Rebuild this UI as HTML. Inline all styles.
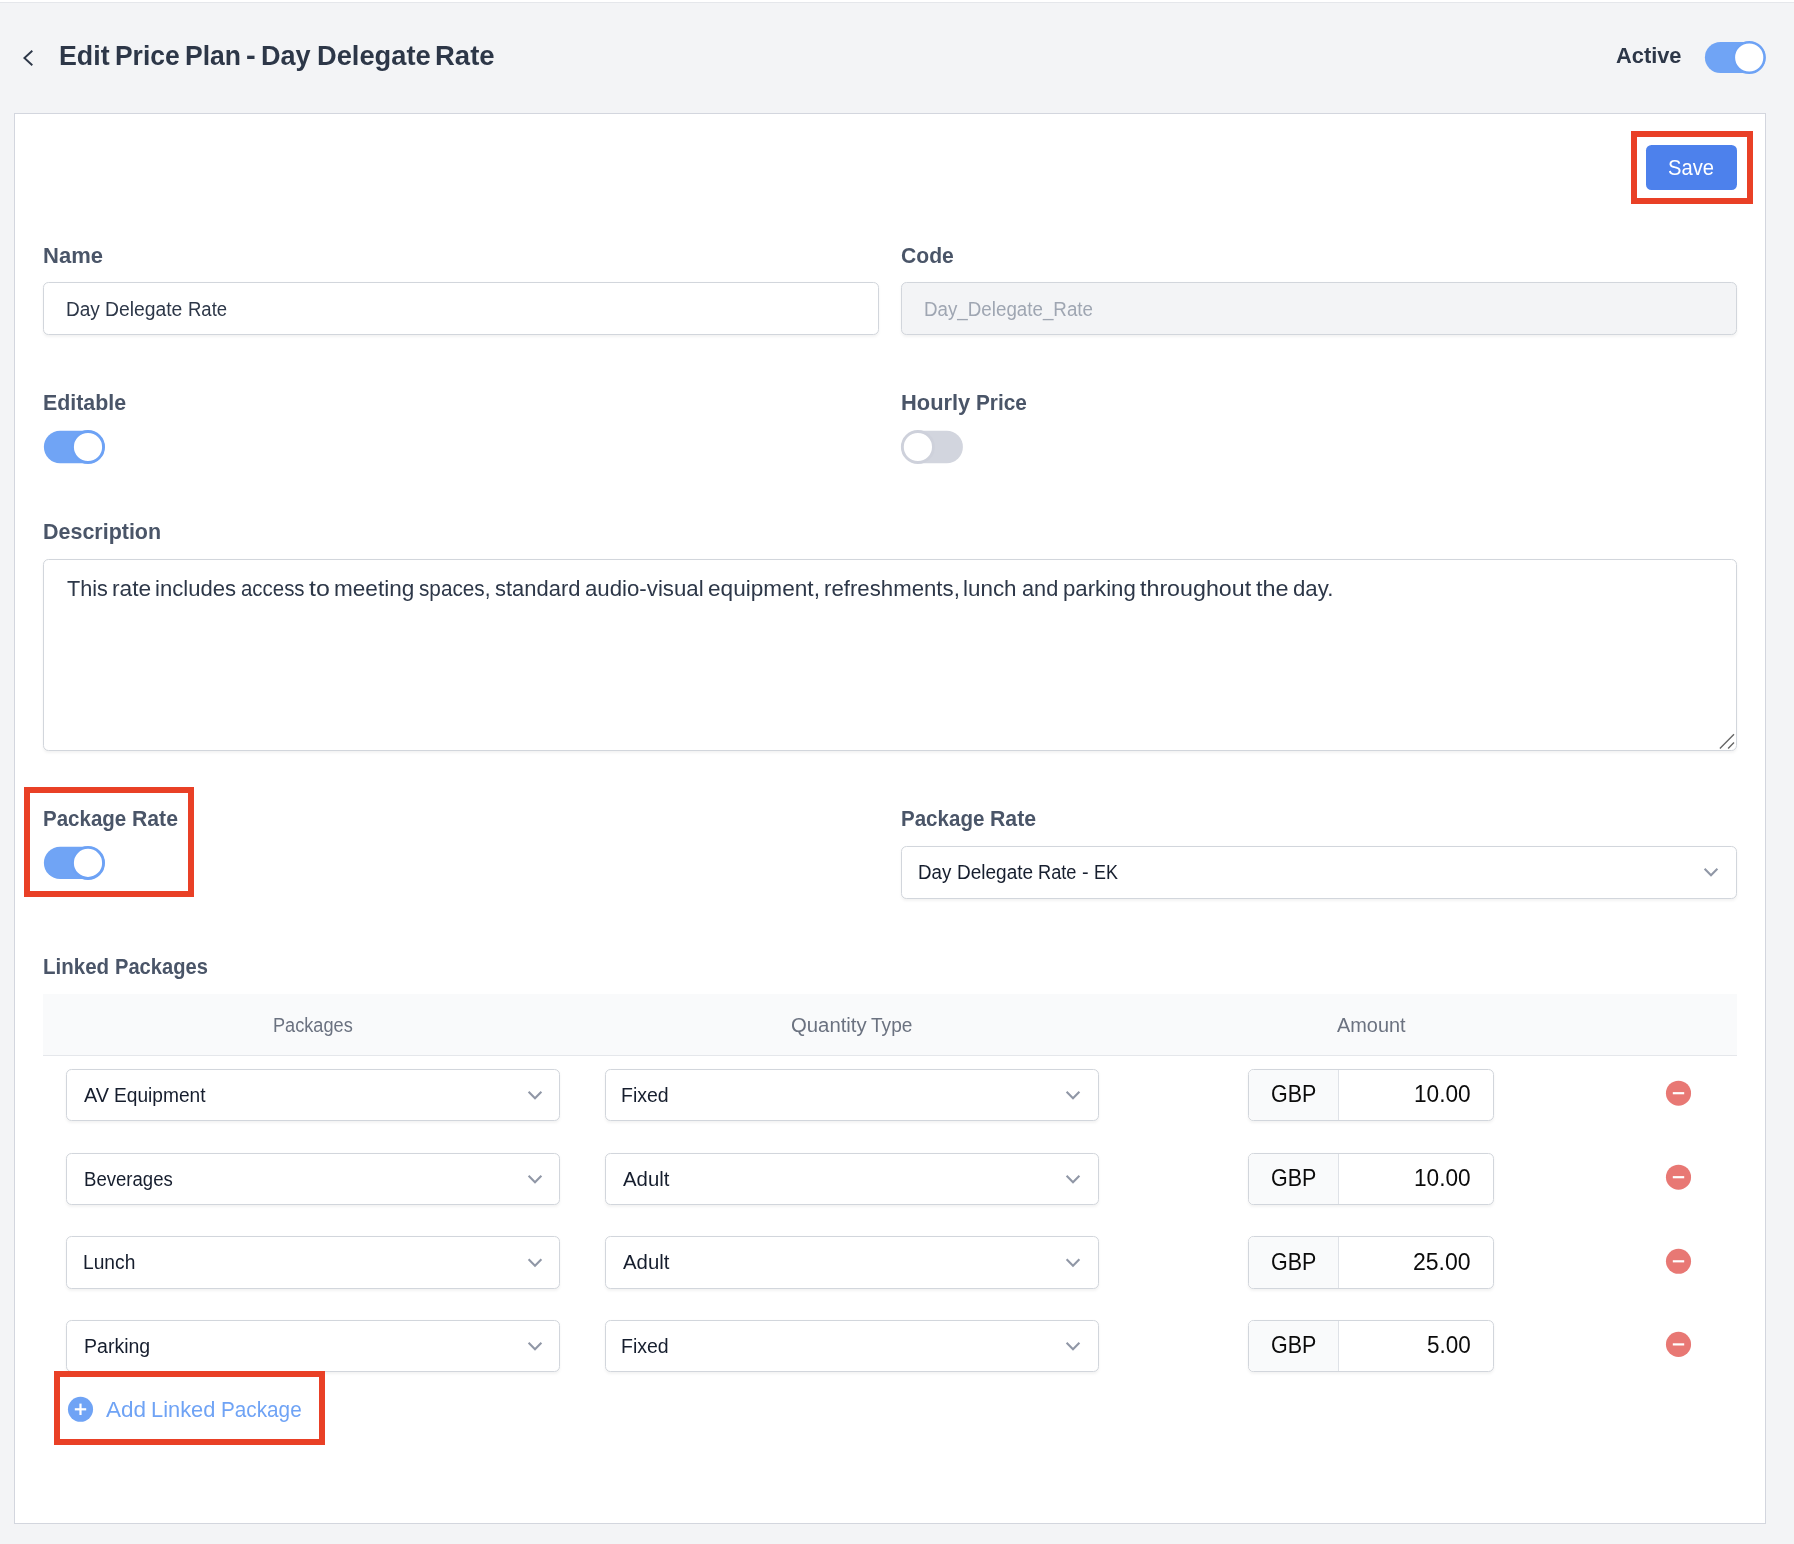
<!DOCTYPE html><html lang="en"><head><meta charset="utf-8"><title>Edit Price Plan - Day Delegate Rate</title>
<style>
html,body{margin:0;padding:0}
body{width:1794px;height:1544px;position:relative;overflow:hidden;background:#f3f4f6;font-family:"Liberation Sans", sans-serif;}
div,span,svg{position:absolute;box-sizing:border-box}
.t{white-space:pre;line-height:1;transform-origin:0 0;display:block}
.in{border:1px solid #d2d6dc;border-radius:5.5px;background:#fff;box-shadow:0 1.4px 2.8px rgba(0,0,0,.05)}
.red{border:6px solid #e94026}
</style></head><body>
<div style="left:0;top:0;width:1794px;height:2px;background:#fff"></div>
<div style="left:0;top:2px;width:1794px;height:1px;background:#e5e7eb"></div>
<div style="left:14px;top:113px;width:1752px;height:1411px;background:#fff;border:1px solid #d3d6de"></div>
<div style="left:1646px;top:145px;width:91px;height:45px;background:#4d81ec;border-radius:5.5px"></div>
<div class="red" style="left:1631px;top:131px;width:122px;height:73px"></div>
<div class="in" style="left:43px;top:282px;width:836px;height:53px"></div>
<div class="in" style="left:901px;top:282px;width:836px;height:53px;background:#f3f4f6"></div>
<div class="in" style="left:43px;top:559px;width:1694px;height:192px"></div>
<div class="red" style="left:24px;top:787px;width:170px;height:110px"></div>
<div class="in" style="left:901px;top:846px;width:836px;height:53px"></div>
<div style="left:43px;top:994px;width:1694px;height:61px;background:#f9fafb"></div>
<div style="left:43px;top:1055px;width:1694px;height:1px;background:#e5e7eb"></div>
<div class="in" style="left:66px;top:1069px;width:494px;height:52px"></div>
<div class="in" style="left:605px;top:1069px;width:494px;height:52px"></div>
<div class="in" style="left:1248px;top:1069px;width:246px;height:52px"></div>
<div style="left:1249px;top:1070px;width:90px;height:50px;background:#f9fafb;border-right:1px solid #dfe2e7;border-radius:4.5px 0 0 4.5px"></div>
<div class="in" style="left:66px;top:1153px;width:494px;height:52px"></div>
<div class="in" style="left:605px;top:1153px;width:494px;height:52px"></div>
<div class="in" style="left:1248px;top:1153px;width:246px;height:52px"></div>
<div style="left:1249px;top:1154px;width:90px;height:50px;background:#f9fafb;border-right:1px solid #dfe2e7;border-radius:4.5px 0 0 4.5px"></div>
<div class="in" style="left:66px;top:1236px;width:494px;height:53px"></div>
<div class="in" style="left:605px;top:1236px;width:494px;height:53px"></div>
<div class="in" style="left:1248px;top:1236px;width:246px;height:53px"></div>
<div style="left:1249px;top:1237px;width:90px;height:51px;background:#f9fafb;border-right:1px solid #dfe2e7;border-radius:4.5px 0 0 4.5px"></div>
<div class="in" style="left:66px;top:1320px;width:494px;height:52px"></div>
<div class="in" style="left:605px;top:1320px;width:494px;height:52px"></div>
<div class="in" style="left:1248px;top:1320px;width:246px;height:52px"></div>
<div style="left:1249px;top:1321px;width:90px;height:50px;background:#f9fafb;border-right:1px solid #dfe2e7;border-radius:4.5px 0 0 4.5px"></div>
<svg style="left:0;top:0" width="1794" height="1544" viewBox="0 0 1794 1544"><path d="M32.3 50.7 L24.4 58 L32.3 65.3" fill="none" stroke="#2d3748" stroke-width="1.9"/><rect x="1704.9" y="42.00" width="60.6" height="31.0" rx="15.50" fill="#70a4f5"/><circle cx="1749.2" cy="57.5" r="15.35" fill="#fff" stroke="#6da2f5" stroke-width="2.5"/><rect x="43.9" y="430.80" width="60.6" height="32.4" rx="16.20" fill="#70a4f5"/><circle cx="88.0" cy="447.0" r="15.55" fill="#fff" stroke="#6da2f5" stroke-width="2.9"/><rect x="901.5" y="430.80" width="61.4" height="32.4" rx="16.20" fill="#d2d5de"/><circle cx="917.9" cy="447.0" r="15.55" fill="#fff" stroke="#ced1db" stroke-width="2.9"/><rect x="43.9" y="846.70" width="60.6" height="32.4" rx="16.20" fill="#70a4f5"/><circle cx="88.0" cy="862.9" r="15.55" fill="#fff" stroke="#6da2f5" stroke-width="2.9"/><path d="M1719.9 748.4 L1734 734.3 M1728.1 748.4 L1734 742.5" stroke="#666" stroke-width="1.4" fill="none"/><path d="M1704.6 868.8 l6.4 6.4 l6.4 -6.4" fill="none" stroke="#9097a6" stroke-width="2.1"/><path d="M528.6 1091.8 l6.4 6.4 l6.4 -6.4" fill="none" stroke="#9097a6" stroke-width="2.1"/><path d="M1066.6 1091.8 l6.4 6.4 l6.4 -6.4" fill="none" stroke="#9097a6" stroke-width="2.1"/><path d="M528.6 1175.8 l6.4 6.4 l6.4 -6.4" fill="none" stroke="#9097a6" stroke-width="2.1"/><path d="M1066.6 1175.8 l6.4 6.4 l6.4 -6.4" fill="none" stroke="#9097a6" stroke-width="2.1"/><path d="M528.6 1259.3 l6.4 6.4 l6.4 -6.4" fill="none" stroke="#9097a6" stroke-width="2.1"/><path d="M1066.6 1259.3 l6.4 6.4 l6.4 -6.4" fill="none" stroke="#9097a6" stroke-width="2.1"/><path d="M528.6 1342.8 l6.4 6.4 l6.4 -6.4" fill="none" stroke="#9097a6" stroke-width="2.1"/><path d="M1066.6 1342.8 l6.4 6.4 l6.4 -6.4" fill="none" stroke="#9097a6" stroke-width="2.1"/><circle cx="1678.5" cy="1093.2" r="12.55" fill="#e87874"/><rect x="1672.8" y="1092.1" width="11.4" height="2.2" fill="#fff"/><circle cx="1678.5" cy="1177.2" r="12.55" fill="#e87874"/><rect x="1672.8" y="1176.1" width="11.4" height="2.2" fill="#fff"/><circle cx="1678.5" cy="1261.3" r="12.55" fill="#e87874"/><rect x="1672.8" y="1260.2" width="11.4" height="2.2" fill="#fff"/><circle cx="1678.5" cy="1344.4" r="12.55" fill="#e87874"/><rect x="1672.8" y="1343.3" width="11.4" height="2.2" fill="#fff"/><circle cx="80.5" cy="1409.3" r="12.55" fill="#6fa3f5"/><rect x="74.8" y="1408.2" width="11.4" height="2.2" fill="#fff"/><rect x="79.4" y="1403.6" width="2.2" height="11.4" fill="#fff"/></svg>
<div class="red" style="left:54px;top:1371px;width:271px;height:74px"></div>
<div id="txt" style="left:0;top:0;width:1794px;height:1544px;will-change:transform">
<span class="t" style="left:58.81px;top:41.80px;font-size:28px;font-weight:700;color:#2d3748;transform:scaleX(0.9560)">Edit </span>
<span class="t" style="left:115.03px;top:41.80px;font-size:28px;font-weight:700;color:#2d3748;transform:scaleX(0.9430)">Price </span>
<span class="t" style="left:185.22px;top:41.80px;font-size:28px;font-weight:700;color:#2d3748;transform:scaleX(0.9477)">Plan </span>
<span class="t" style="left:246.23px;top:41.80px;font-size:28px;font-weight:700;color:#2d3748;transform:scaleX(1.0386)">- </span>
<span class="t" style="left:261.19px;top:41.80px;font-size:28px;font-weight:700;color:#2d3748;transform:scaleX(0.9665)">Day </span>
<span class="t" style="left:316.97px;top:41.80px;font-size:28px;font-weight:700;color:#2d3748;transform:scaleX(0.9739)">Delegate </span>
<span class="t" style="left:435.46px;top:41.80px;font-size:28px;font-weight:700;color:#2d3748;transform:scaleX(0.9814)">Rate</span>
<span class="t" style="left:1616.49px;top:44.70px;font-size:22.4px;font-weight:700;color:#2d3748;transform:scaleX(0.9746)">Active</span>
<span class="t" style="left:1668.40px;top:156.80px;font-size:22.4px;font-weight:400;color:#ffffff;transform:scaleX(0.9018)">Save</span>
<span class="t" style="left:43.02px;top:244.80px;font-size:22.4px;font-weight:700;color:#4a5568;transform:scaleX(0.9838)">Name</span>
<span class="t" style="left:901.17px;top:244.80px;font-size:22.4px;font-weight:700;color:#4a5568;transform:scaleX(0.9434)">Code</span>
<span class="t" style="left:65.92px;top:299.60px;font-size:19.6px;font-weight:400;color:#2d3748;transform:scaleX(0.9723)">Day </span>
<span class="t" style="left:105.26px;top:299.60px;font-size:19.6px;font-weight:400;color:#2d3748;transform:scaleX(0.9860)">Delegate </span>
<span class="t" style="left:187.75px;top:299.60px;font-size:19.6px;font-weight:400;color:#2d3748;transform:scaleX(0.9445)">Rate</span>
<span class="t" style="left:923.84px;top:299.60px;font-size:19.6px;font-weight:400;color:#9fa6b2;transform:scaleX(0.9575)">Day_Delegate_Rate</span>
<span class="t" style="left:43.07px;top:391.90px;font-size:22.4px;font-weight:700;color:#4a5568;transform:scaleX(0.9543)">Editable</span>
<span class="t" style="left:901.04px;top:391.90px;font-size:22.4px;font-weight:700;color:#4a5568;transform:scaleX(0.9763)">Hourly </span>
<span class="t" style="left:976.04px;top:391.90px;font-size:22.4px;font-weight:700;color:#4a5568;transform:scaleX(0.9289)">Price</span>
<span class="t" style="left:43.26px;top:521.30px;font-size:22.4px;font-weight:700;color:#4a5568;transform:scaleX(0.9587)">Description</span>
<span class="t" style="left:66.61px;top:577.80px;font-size:22.2px;font-weight:400;color:#2d3748;transform:scaleX(0.9742)">This </span>
<span class="t" style="left:112.05px;top:577.80px;font-size:22.2px;font-weight:400;color:#2d3748;transform:scaleX(1.0254)">rate </span>
<span class="t" style="left:155.33px;top:577.80px;font-size:22.2px;font-weight:400;color:#2d3748;transform:scaleX(0.9955)">includes </span>
<span class="t" style="left:240.86px;top:577.80px;font-size:22.2px;font-weight:400;color:#2d3748;transform:scaleX(0.9206)">access </span>
<span class="t" style="left:309.19px;top:577.80px;font-size:22.2px;font-weight:400;color:#2d3748;transform:scaleX(1.1250)">to </span>
<span class="t" style="left:334.40px;top:577.80px;font-size:22.2px;font-weight:400;color:#2d3748;transform:scaleX(1.0166)">meeting </span>
<span class="t" style="left:419.46px;top:577.80px;font-size:22.2px;font-weight:400;color:#2d3748;transform:scaleX(0.9340)">spaces, </span>
<span class="t" style="left:494.81px;top:577.80px;font-size:22.2px;font-weight:400;color:#2d3748;transform:scaleX(0.9892)">standard </span>
<span class="t" style="left:584.81px;top:577.80px;font-size:22.2px;font-weight:400;color:#2d3748;transform:scaleX(1.0016)">audio-visual </span>
<span class="t" style="left:708.16px;top:577.80px;font-size:22.2px;font-weight:400;color:#2d3748;transform:scaleX(1.0195)">equipment, </span>
<span class="t" style="left:823.77px;top:577.80px;font-size:22.2px;font-weight:400;color:#2d3748;transform:scaleX(1.0013)">refreshments, </span>
<span class="t" style="left:963.49px;top:577.80px;font-size:22.2px;font-weight:400;color:#2d3748;transform:scaleX(1.0097)">lunch </span>
<span class="t" style="left:1021.52px;top:577.80px;font-size:22.2px;font-weight:400;color:#2d3748;transform:scaleX(0.9782)">and </span>
<span class="t" style="left:1062.65px;top:577.80px;font-size:22.2px;font-weight:400;color:#2d3748;transform:scaleX(1.0005)">parking </span>
<span class="t" style="left:1140.26px;top:577.80px;font-size:22.2px;font-weight:400;color:#2d3748;transform:scaleX(1.0472)">throughout </span>
<span class="t" style="left:1256.13px;top:577.80px;font-size:22.2px;font-weight:400;color:#2d3748;transform:scaleX(1.0577)">the </span>
<span class="t" style="left:1293.21px;top:577.80px;font-size:22.2px;font-weight:400;color:#2d3748;transform:scaleX(1.0012)">day.</span>
<span class="t" style="left:43.13px;top:807.90px;font-size:22.4px;font-weight:700;color:#4a5568;transform:scaleX(0.9160)">Package </span>
<span class="t" style="left:132.26px;top:807.90px;font-size:22.4px;font-weight:700;color:#4a5568;transform:scaleX(0.9475)">Rate</span>
<span class="t" style="left:900.62px;top:807.90px;font-size:22.4px;font-weight:700;color:#4a5568;transform:scaleX(0.9174)">Package </span>
<span class="t" style="left:989.89px;top:807.90px;font-size:22.4px;font-weight:700;color:#4a5568;transform:scaleX(0.9489)">Rate</span>
<span class="t" style="left:918.25px;top:863.10px;font-size:19.6px;font-weight:400;color:#161e2e;transform:scaleX(0.9566)">Day </span>
<span class="t" style="left:956.95px;top:863.10px;font-size:19.6px;font-weight:400;color:#161e2e;transform:scaleX(0.9700)">Delegate </span>
<span class="t" style="left:1038.10px;top:863.10px;font-size:19.6px;font-weight:400;color:#161e2e;transform:scaleX(0.9292)">Rate </span>
<span class="t" style="left:1081.70px;top:863.10px;font-size:19.6px;font-weight:400;color:#161e2e;transform:scaleX(1.0122)">- </span>
<span class="t" style="left:1093.72px;top:863.10px;font-size:19.6px;font-weight:400;color:#161e2e;transform:scaleX(0.9151)">EK</span>
<span class="t" style="left:43.13px;top:955.90px;font-size:22.4px;font-weight:700;color:#4a5568;transform:scaleX(0.9156)">Linked </span>
<span class="t" style="left:115.19px;top:955.90px;font-size:22.4px;font-weight:700;color:#4a5568;transform:scaleX(0.8986)">Packages</span>
<span class="t" style="left:272.59px;top:1015.60px;font-size:19.6px;font-weight:400;color:#6b7280;transform:scaleX(0.9266)">Packages</span>
<span class="t" style="left:790.59px;top:1015.60px;font-size:19.6px;font-weight:400;color:#6b7280;transform:scaleX(1.0368)">Quantity </span>
<span class="t" style="left:871.35px;top:1015.60px;font-size:19.6px;font-weight:400;color:#6b7280;transform:scaleX(0.9743)">Type</span>
<span class="t" style="left:1336.70px;top:1015.60px;font-size:19.6px;font-weight:400;color:#6b7280;transform:scaleX(1.0152)">Amount</span>
<span class="t" style="left:83.80px;top:1085.90px;font-size:19.6px;font-weight:400;color:#161e2e;transform:scaleX(1.0146)">AV </span>
<span class="t" style="left:113.99px;top:1085.90px;font-size:19.6px;font-weight:400;color:#161e2e;transform:scaleX(0.9774)">Equipment</span>
<span class="t" style="left:621.38px;top:1085.90px;font-size:19.6px;font-weight:400;color:#161e2e;transform:scaleX(0.9956)">Fixed</span>
<span class="t" style="left:1270.96px;top:1083.40px;font-size:23.2px;font-weight:400;color:#0b0b0b;transform:scaleX(0.9244)">GBP</span>
<span class="t" style="left:1414.19px;top:1083.40px;font-size:23.2px;font-weight:400;color:#0b0b0b;transform:scaleX(0.9770)">10.00</span>
<span class="t" style="left:83.56px;top:1169.90px;font-size:19.6px;font-weight:400;color:#161e2e;transform:scaleX(0.9477)">Beverages</span>
<span class="t" style="left:623.00px;top:1169.90px;font-size:19.6px;font-weight:400;color:#161e2e;transform:scaleX(1.0382)">Adult</span>
<span class="t" style="left:1270.96px;top:1167.40px;font-size:23.2px;font-weight:400;color:#0b0b0b;transform:scaleX(0.9244)">GBP</span>
<span class="t" style="left:1414.19px;top:1167.40px;font-size:23.2px;font-weight:400;color:#0b0b0b;transform:scaleX(0.9770)">10.00</span>
<span class="t" style="left:83.41px;top:1253.00px;font-size:19.6px;font-weight:400;color:#161e2e;transform:scaleX(0.9802)">Lunch</span>
<span class="t" style="left:623.00px;top:1253.00px;font-size:19.6px;font-weight:400;color:#161e2e;transform:scaleX(1.0382)">Adult</span>
<span class="t" style="left:1270.96px;top:1250.50px;font-size:23.2px;font-weight:400;color:#0b0b0b;transform:scaleX(0.9244)">GBP</span>
<span class="t" style="left:1413.28px;top:1250.50px;font-size:23.2px;font-weight:400;color:#0b0b0b;transform:scaleX(0.9929)">25.00</span>
<span class="t" style="left:83.58px;top:1336.70px;font-size:19.6px;font-weight:400;color:#161e2e;transform:scaleX(0.9965)">Parking</span>
<span class="t" style="left:621.38px;top:1336.70px;font-size:19.6px;font-weight:400;color:#161e2e;transform:scaleX(0.9956)">Fixed</span>
<span class="t" style="left:1270.96px;top:1334.20px;font-size:23.2px;font-weight:400;color:#0b0b0b;transform:scaleX(0.9244)">GBP</span>
<span class="t" style="left:1427.03px;top:1334.20px;font-size:23.2px;font-weight:400;color:#0b0b0b;transform:scaleX(0.9711)">5.00</span>
<span class="t" style="left:106.47px;top:1398.90px;font-size:22.4px;font-weight:400;color:#6fa3f5;transform:scaleX(1.0064)">Add </span>
<span class="t" style="left:151.28px;top:1398.90px;font-size:22.4px;font-weight:400;color:#6fa3f5;transform:scaleX(0.9751)">Linked </span>
<span class="t" style="left:220.55px;top:1398.90px;font-size:22.4px;font-weight:400;color:#6fa3f5;transform:scaleX(0.9258)">Package</span>
</div>
</body></html>
